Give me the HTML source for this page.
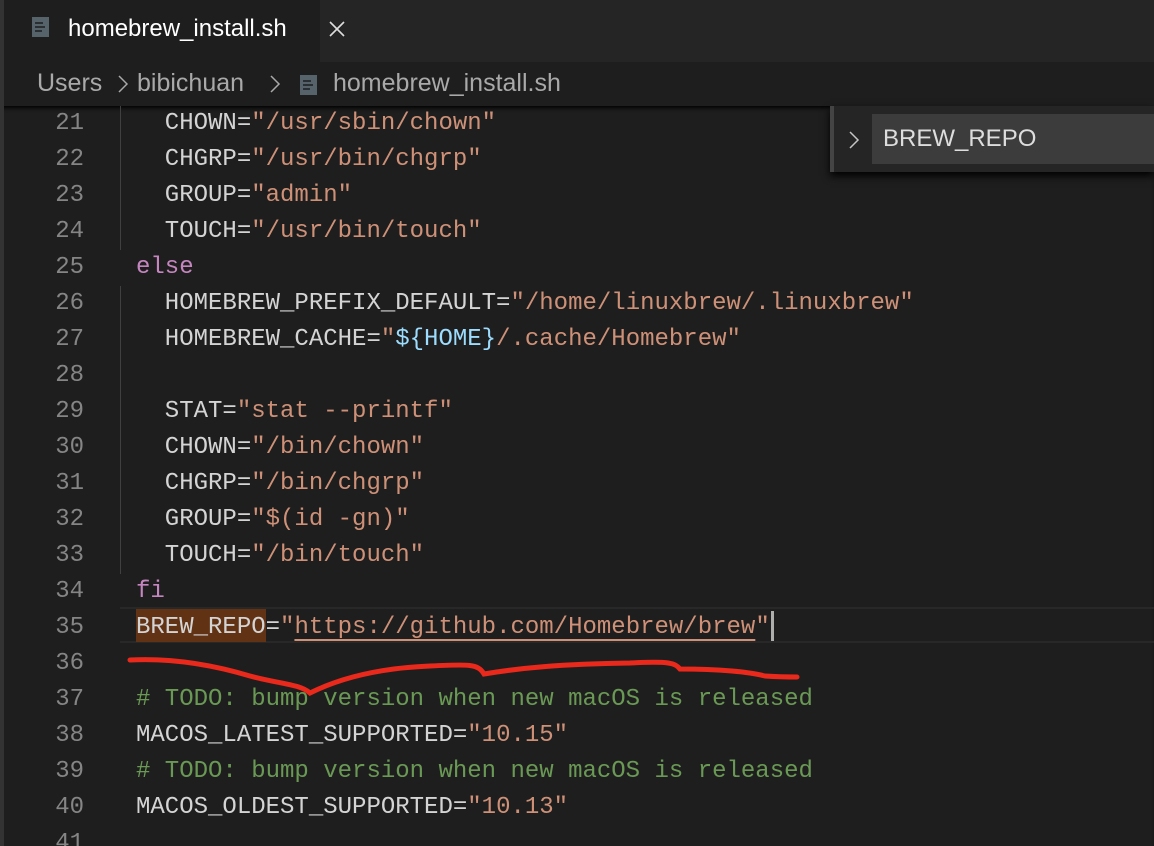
<!DOCTYPE html>
<html><head><style>
*{margin:0;padding:0;box-sizing:border-box}
html,body{width:1154px;height:846px;overflow:hidden}
body{background:#1e1e1e;position:relative;font-family:"Liberation Sans",sans-serif}
.tabbar{position:absolute;left:0;top:0;width:1154px;height:62px;background:#252526}
.tab{position:absolute;left:4px;top:0;width:316px;height:62px;background:#1e1e1e;color:#fff;font-size:24px}
.strip{position:absolute;left:0;top:0;width:4px;height:846px;background:#333}
.fi{position:absolute;width:17px;height:20px;background:#56636b}
.fi i{position:absolute;left:3px;height:2px;background:#2a2f33}
.crumb{position:absolute;top:69px;font-size:25px;color:#a9a9a9;white-space:nowrap}
.ed{position:absolute;left:0;top:106px;width:1154px;height:740px;box-shadow:inset 0 4px 4px -2px #000}
.ln{position:absolute;left:0;width:84px;text-align:right;color:#858585;font:24px/36px "Liberation Mono",monospace}
.cd{position:absolute;left:136px;white-space:pre;color:#d4d4d4;font:24px/36px "Liberation Mono",monospace}
.s{color:#ce9178}.k{color:#c586c0}.c{color:#6a9955}.b{color:#9cdcfe}
.guide{position:absolute;left:120px;width:1px;background:#404040}
</style></head><body>
<div class="tabbar"></div>
<div class="tab">
 <div class="fi" style="left:28px;top:17px"><i style="top:5px;width:8px"></i><i style="top:9px;width:10px"></i><i style="top:13px;width:7px"></i></div>
 <span style="position:absolute;left:64px;top:15px">homebrew_install.sh</span>
 <svg style="position:absolute;left:324px;top:20px" width="18" height="18"><path d="M2,2 L16,16 M16,2 L2,16" stroke="#ddd" stroke-width="1.6"/></svg>
</div>
<div class="crumb" style="left:37px">Users</div>
<svg style="position:absolute;left:117px;top:74px" width="12" height="20"><path d="M2,2 L10,10 L2,18" fill="none" stroke="#a9a9a9" stroke-width="1.5"/></svg>
<div class="crumb" style="left:137px">bibichuan</div>
<svg style="position:absolute;left:269px;top:74px" width="12" height="20"><path d="M2,2 L10,10 L2,18" fill="none" stroke="#a9a9a9" stroke-width="1.5"/></svg>
<div class="fi" style="left:300px;top:75px"><i style="top:5px;width:8px"></i><i style="top:9px;width:10px"></i><i style="top:13px;width:7px"></i></div>
<div class="crumb" style="left:333px">homebrew_install.sh</div>
<div class="ed"></div>
<div class="strip"></div>
<div class="guide" style="top:106px;height:144px"></div>
<div class="guide" style="top:286px;height:288px"></div>
<div style="position:absolute;left:120px;top:607px;width:1034px;height:36px;border-top:2px solid #282828;border-bottom:2px solid #282828"></div>
<div style="position:absolute;left:136px;top:609px;width:130px;height:33px;background:#613214"></div>
<div class="ln" style="top:106px">21<br>22<br>23<br>24<br>25<br>26<br>27<br>28<br>29<br>30<br>31<br>32<br>33<br>34<br>35<br>36<br>37<br>38<br>39<br>40<br>41</div>
<div class="cd" style="top:106px">  CHOWN=<span class="s">"/usr/sbin/chown"</span>
  CHGRP=<span class="s">"/usr/bin/chgrp"</span>
  GROUP=<span class="s">"admin"</span>
  TOUCH=<span class="s">"/usr/bin/touch"</span>
<span class="k">else</span>
  HOMEBREW_PREFIX_DEFAULT=<span class="s">"/home/linuxbrew/.linuxbrew"</span>
  HOMEBREW_CACHE=<span class="s">"</span><span class="b">${HOME}</span><span class="s">/.cache/Homebrew"</span>

  STAT=<span class="s">"stat --printf"</span>
  CHOWN=<span class="s">"/bin/chown"</span>
  CHGRP=<span class="s">"/bin/chgrp"</span>
  GROUP=<span class="s">"$(id -gn)"</span>
  TOUCH=<span class="s">"/bin/touch"</span>
<span class="k">fi</span>
BREW_REPO=<span class="s">"<span style="text-decoration:underline;text-underline-offset:6px">https://github.com/Homebrew/brew</span>"</span>

<span class="c"># TODO: bump version when new macOS is released</span>
MACOS_LATEST_SUPPORTED=<span class="s">"10.15"</span>
<span class="c"># TODO: bump version when new macOS is released</span>
MACOS_OLDEST_SUPPORTED=<span class="s">"10.13"</span>
</div>
<div style="position:absolute;left:771px;top:611px;width:3px;height:30px;background:#aeafad"></div>
<div style="position:absolute;left:830px;top:106px;width:324px;height:66px;background:#252526;border-left:4px solid #444;box-shadow:0 4px 8px #000"></div>
<svg style="position:absolute;left:848px;top:130px" width="12" height="20"><path d="M2,2 L10,10 L2,18" fill="none" stroke="#c5c5c5" stroke-width="1.5"/></svg>
<div style="position:absolute;left:872px;top:114px;width:282px;height:50px;background:#3c3c3c;color:#ddd;font-size:24px;line-height:50px;padding-left:11px">BREW_REPO</div>
<svg style="position:absolute;left:0;top:0" width="1154" height="846"><path d="M130,660 C170,658 210,664 250,676 C280,684 300,684 310,693 C340,678 380,668 430,666 C470,664 478,664 484,674 C520,668 560,664 630,663 C670,661 675,663 680,669 C720,669 750,672 765,676 C780,677 790,677 797,677" fill="none" stroke="#e8291c" stroke-width="5" stroke-linecap="round"/></svg>
</body></html>
